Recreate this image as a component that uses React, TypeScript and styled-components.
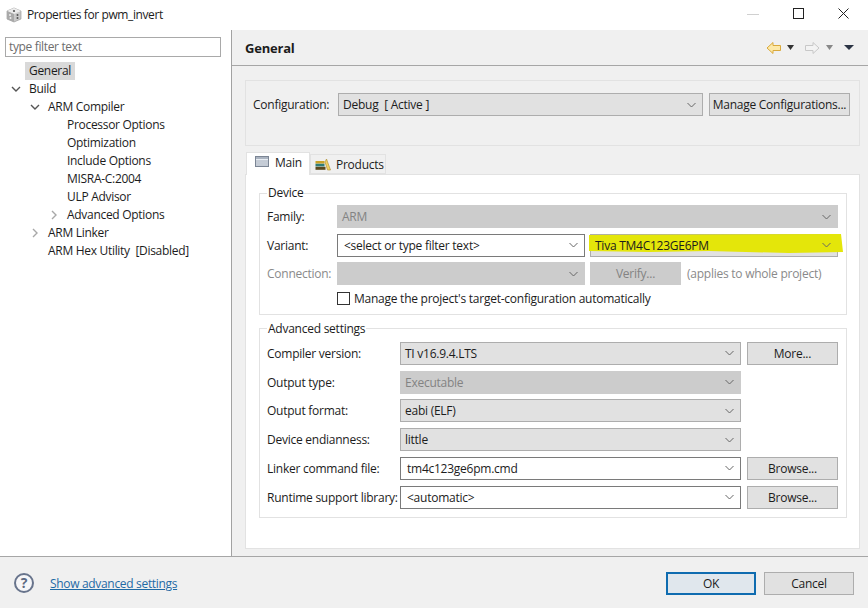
import React from "react";
import styled, { createGlobalStyle } from "styled-components";

const Global = createGlobalStyle`
  html, body { margin: 0; padding: 0; background: #fff; }
  * { box-sizing: border-box; }
  body {
    font-family: "Open Sans", "Noto Sans", "Liberation Sans", sans-serif;
    font-size: 12px;
    letter-spacing: -0.25px;
    color: #1c1c1c;
  }
`;

const Window = styled.div`
  width: 868px;
  height: 608px;
  display: flex;
  flex-direction: column;
  overflow: hidden;
  background: #fff;
`;

const TitleBar = styled.div`
  height: 30px;
  flex: none;
  display: flex;
  align-items: center;
  padding: 0 0 1px 6px;
  font-size: 12px;
`;
const TitleText = styled.span`
  margin-left: 5px;
  flex: 1;
  letter-spacing: -0.4px;
`;
const WinControls = styled.div`
  display: flex;
  align-items: center;
  padding: 0 19px 2px 0;
  gap: 34px;
`;

const Body = styled.div`
  flex: 1;
  display: flex;
  min-height: 0;
`;

const Sidebar = styled.div`
  width: 232px;
  flex: none;
  border-right: 1px solid #a2a2a2;
  padding: 7px 10px 0 5px;
`;
const Filter = styled.div`
  height: 20px;
  border: 1px solid #a9a9a9;
  padding-left: 3px;
  line-height: 17px;
  color: #6d6d6d;
  letter-spacing: -0.35px;
`;
const Tree = styled.div`
  margin-top: 5px;
`;
const TreeRow = styled.div<{ $level: number }>`
  height: 18px;
  display: flex;
  align-items: center;
  padding-left: ${({ $level }) => 20 + $level * 19}px;
  position: relative;
`;
const TreeLabel = styled.span<{ $selected?: boolean }>`
  padding: 0 4px;
  line-height: 18px;
  background: ${({ $selected }) => ($selected ? "#d9d9d9" : "transparent")};
  white-space: pre;
  letter-spacing: -0.3px;
`;
const Twist = styled.svg`
  position: absolute;
  margin-left: -14px;
  width: 10px;
  height: 10px;
`;

const Content = styled.div`
  flex: 1;
  background: #f0f0f0;
  display: flex;
  flex-direction: column;
  min-width: 0;
`;
const PageHeader = styled.div`
  height: 36px;
  flex: none;
  border-bottom: 1px solid #a6a6a6;
  display: flex;
  align-items: center;
  padding: 0 14px 0 13px;
  justify-content: space-between;
`;
const PageTitle = styled.div`
  font-size: 13px;
  font-weight: 700;
  letter-spacing: -0.2px;
`;
const NavIcons = styled.div`
  display: flex;
  align-items: center;
`;
const NavGlyph = styled.svg<{ $gap: number }>`
  margin-left: ${({ $gap }) => $gap}px;
  flex: none;
`;
const ContentInner = styled.div`
  flex: 1;
  padding: 14px 8px 7px 13px;
  display: flex;
  flex-direction: column;
`;
const ConfigBox = styled.div`
  height: 66px;
  flex: none;
  border: 1px solid #e2e2e2;
  padding: 12px 9px 0 7px;
  display: flex;
  align-items: flex-start;
  gap: 6px;
`;
const ConfigLabel = styled.span`
  width: 79px;
  line-height: 23px;
  flex: none;
`;

const Tabs = styled.div`
  margin-top: 5px;
  height: 23px;
  flex: none;
  display: flex;
  align-items: flex-end;
  padding-left: 1px;
`;
const Tab = styled.div<{ $active?: boolean }>`
  height: ${({ $active }) => ($active ? 23 : 20)}px;
  width: ${({ $active }) => ($active ? 64 : 76)}px;
  background: ${({ $active }) => ($active ? "#fff" : "#f0f0f0")};
  border: 1px solid #e2e2e2;
  border-bottom: ${({ $active }) => ($active ? "none" : "1px solid #e2e2e2")};
  display: flex;
  align-items: center;
  padding: ${({ $active }) => ($active ? "0 0 4px 8px" : "0 0 0 4px")};
  gap: ${({ $active }) => ($active ? 6 : 5)}px;
  margin-bottom: ${({ $active }) => ($active ? -1 : 0)}px;
  position: relative;
`;
const Folder = styled.div`
  flex: 1;
  background: #fff;
  border: 1px solid #e2e2e2;
  padding: 10px 12px 0 13px;
`;

const Group = styled.fieldset`
  margin: 0 0 6px;
  padding: 4px 8px 8px 7px;
  border: 1px solid #e2e2e2;
  min-width: 0;
`;
const Legend = styled.legend`
  padding: 0 1px;
  margin-left: 0;
  line-height: 16px;
`;

const DeviceGrid = styled.div`
  display: grid;
  grid-template-columns: 65px 248px 91px 1fr;
  grid-template-rows: 23px 23px 23px 15px;
  column-gap: 5px;
  row-gap: 5.6px;
  align-items: center;
`;
const AdvancedGrid = styled.div`
  display: grid;
  grid-template-columns: 128px 341px 92px;
  column-gap: 5px;
  grid-auto-rows: 23px;
  row-gap: 5.8px;
  margin-top: 1px;
  align-items: center;
`;
const FieldLabel = styled.span<{ $disabled?: boolean }>`
  color: ${({ $disabled }) => ($disabled ? "#8a8a8a" : "inherit")};
  white-space: nowrap;
`;

type ComboKind = "flat" | "edit" | "disabled";
const ComboBox = styled.div<{ $kind: ComboKind; $span?: string; $w?: number }>`
  height: 23px;
  width: ${({ $w }) => ($w ? `${$w}px` : "auto")};
  grid-column: ${({ $span }) => $span ?? "auto"};
  position: relative;
  display: flex;
  align-items: center;
  justify-content: space-between;
  padding: 0 6px 0 ${({ $kind }) => ($kind === "edit" ? 6 : 4)}px;
  background: ${({ $kind }) =>
    $kind === "edit" ? "#fff" : $kind === "disabled" ? "#cccccc" : "#e1e1e1"};
  border: 1px solid
    ${({ $kind }) =>
      $kind === "edit" ? "#7a7a7a" : $kind === "disabled" ? "#cccccc" : "#adadad"};
  color: ${({ $kind }) => ($kind === "disabled" ? "#838383" : "inherit")};
`;
const ComboText = styled.span`
  position: relative;
  white-space: pre;
`;
const Chevron = styled.svg`
  position: relative;
  width: 9px;
  height: 6px;
  flex: none;
`;
const Highlight = styled.svg`
  position: absolute;
  left: -2px;
  top: -1px;
  width: 254px;
  height: 20px;
`;

const Button = styled.button<{ $disabled?: boolean; $default?: boolean; $w?: number; $end?: boolean }>`
  height: 23px;
  width: ${({ $w }) => ($w ? `${$w}px` : "auto")};
  justify-self: ${({ $end }) => ($end ? "end" : "stretch")};
  padding: 0;
  font: inherit;
  letter-spacing: inherit;
  background: ${({ $disabled, $default }) => ($disabled ? "#cccccc" : $default ? "#e0e7ed" : "#e1e1e1")};
  border: ${({ $default }) => ($default ? "2px solid #0f6cb0" : "1px solid #adadad")};
  color: ${({ $disabled }) => ($disabled ? "#838383" : "inherit")};
  ${({ $disabled }) => ($disabled ? "border-color: #cccccc;" : "")}
`;
const Hint = styled.span`
  color: #8a8a8a;
  white-space: nowrap;
  padding-left: 1px;
`;
const CheckRow = styled.label`
  grid-column: 2 / 5;
  display: flex;
  align-items: center;
  gap: 4px;
  height: 15px;
`;
const CheckBox = styled.span`
  width: 13px;
  height: 13px;
  border: 1px solid #333;
  background: #fff;
  flex: none;
`;

const Footer = styled.div`
  height: 52px;
  flex: none;
  background: #f0f0f0;
  border-top: 1px solid #a6a6a6;
  display: flex;
  align-items: center;
  padding: 1px 14px 0 14px;
`;
const HelpIcon = styled.span`
  width: 20px;
  height: 20px;
  border-radius: 50%;
  border: 2px solid #68748c;
  color: #5d6a82;
  font-weight: 700;
  font-size: 14px;
  line-height: 16px;
  text-align: center;
  background: #f6f6f8;
  flex: none;
`;
const HelpLink = styled.a`
  margin-left: 16px;
  flex: 1;
  color: #1f6aa5;
  text-decoration: underline;
  letter-spacing: -0.32px;
`;
const FooterButtons = styled.div`
  display: flex;
  gap: 8px;
`;

const ChevronIcon = () => (
  <Chevron viewBox="0 0 9 6">
    <path d="M0.5 1l4 4 4-4" fill="none" stroke="#666" strokeWidth="1" />
  </Chevron>
);

const Combo = ({ kind, text, span, children }: { kind: ComboKind; text: string; span?: string; children?: React.ReactNode }) => (
  <ComboBox $kind={kind} $span={span}>
    {children}
    <ComboText>{text}</ComboText>
    <ChevronIcon />
  </ComboBox>
);

const TwistDown = () => (
  <Twist viewBox="0 0 10 10">
    <path d="M1 3l4 4 4-4" fill="none" stroke="#555" strokeWidth="1.4" />
  </Twist>
);
const TwistRight = () => (
  <Twist viewBox="0 0 10 10">
    <path d="M3 1l4 4-4 4" fill="none" stroke="#a8a8a8" strokeWidth="1.4" />
  </Twist>
);

const DiceIcon = () => (
  <svg width="16" height="16" viewBox="0 0 16 16">
    <path d="M8 1l7 3v8l-7 3-7-3V4z" fill="#c9c9c9" stroke="#8e8e8e" strokeWidth="0.6" />
    <path d="M8 1l7 3-7 3-7-3z" fill="#ececec" />
    <path d="M8 7v8l-7-3V4z" fill="#a9a9a9" />
    <circle cx="8" cy="4" r="1.1" fill="#555" />
    <circle cx="4" cy="8" r="1" fill="#eee" />
    <circle cx="4.5" cy="11" r="1" fill="#eee" />
    <circle cx="11.5" cy="8" r="1" fill="#555" />
    <circle cx="11.5" cy="11" r="1" fill="#555" />
  </svg>
);

const TableIcon = () => (
  <svg width="14" height="12" viewBox="0 0 14 12">
    <rect x="0.5" y="0.5" width="13" height="10" fill="#e8edf3" stroke="#7b8594" />
    <rect x="1" y="1" width="12" height="2" fill="#aab3c0" />
    <path d="M1 5h12M1 7h12M1 9h12" stroke="#8f99a8" strokeWidth="0.8" />
  </svg>
);

const BooksIcon = () => (
  <svg width="16" height="13" viewBox="0 0 16 13">
    <rect x="0.5" y="3" width="9" height="2.6" fill="#c9a227" />
    <rect x="0.5" y="5.8" width="9" height="2.6" fill="#2f7d78" />
    <rect x="0.5" y="8.8" width="10" height="3" fill="#5b4a1e" />
    <path d="M11.5 1L15.5 12H12.5L10 4z" fill="#f0cf63" stroke="#a88a2b" strokeWidth="0.6" />
  </svg>
);

const Caret = ({ color, w, gap }: { color: string; w: number; gap: number }) => (
  <NavGlyph $gap={gap} width={w} height="5" viewBox="0 0 8 5" preserveAspectRatio="none">
    <path d="M0 0h8L4 5z" fill={color} />
  </NavGlyph>
);

const treeItems: { label: string; level: number; twist?: "down" | "right"; selected?: boolean }[] = [
  { label: "General", level: 0, selected: true },
  { label: "Build", level: 0, twist: "down" },
  { label: "ARM Compiler", level: 1, twist: "down" },
  { label: "Processor Options", level: 2 },
  { label: "Optimization", level: 2 },
  { label: "Include Options", level: 2 },
  { label: "MISRA-C:2004", level: 2 },
  { label: "ULP Advisor", level: 2 },
  { label: "Advanced Options", level: 2, twist: "right" },
  { label: "ARM Linker", level: 1, twist: "right" },
  { label: "ARM Hex Utility  [Disabled]", level: 1 },
];

export default function App() {
  return (
    <Window>
      <Global />
      <TitleBar>
        <DiceIcon />
        <TitleText>Properties for pwm_invert</TitleText>
        <WinControls>
          <svg width="12" height="12" viewBox="0 0 12 12">
            <path d="M0 6.5h12" stroke="#d0d0d0" />
          </svg>
          <svg width="11" height="11" viewBox="0 0 11 11">
            <rect x="0.5" y="0.5" width="10" height="10" fill="none" stroke="#222" />
          </svg>
          <svg width="11" height="11" viewBox="0 0 11 11">
            <path d="M0.5 0.5l10 10M10.5 0.5l-10 10" stroke="#222" />
          </svg>
        </WinControls>
      </TitleBar>
      <Body>
        <Sidebar>
          <Filter>type filter text</Filter>
          <Tree>
            {treeItems.map((item) => (
              <TreeRow key={item.label} $level={item.level}>
                {item.twist === "down" && <TwistDown />}
                {item.twist === "right" && <TwistRight />}
                <TreeLabel $selected={item.selected}>{item.label}</TreeLabel>
              </TreeRow>
            ))}
          </Tree>
        </Sidebar>
        <Content>
          <PageHeader>
            <PageTitle>General</PageTitle>
            <NavIcons>
              <NavGlyph $gap={0} width="16" height="14" viewBox="0 0 16 14">
                <path d="M1 7l6-5.5V4.5h7.5v5H7v3z" fill="#fde9a8" stroke="#d9a93c" strokeWidth="1" />
              </NavGlyph>
              <Caret color="#333" w={7} gap={5} />
              <NavGlyph $gap={10} width="16" height="14" viewBox="0 0 16 14">
                <path d="M15 7L9 1.5V4.5H1.5v5H9v3z" fill="#f3f3f3" stroke="#c8c8c8" strokeWidth="1" />
              </NavGlyph>
              <Caret color="#888" w={7} gap={6} />
              <Caret color="#2b3444" w={10} gap={11} />
            </NavIcons>
          </PageHeader>
          <ContentInner>
            <ConfigBox>
              <ConfigLabel>Configuration:</ConfigLabel>
              <ComboBox $kind="flat" $w={365}>
                <ComboText>Debug  [ Active ]</ComboText>
                <ChevronIcon />
              </ComboBox>
              <Button $w={141}>Manage Configurations...</Button>
            </ConfigBox>
            <Tabs>
              <Tab $active>
                <TableIcon />
                Main
              </Tab>
              <Tab>
                <BooksIcon />
                Products
              </Tab>
            </Tabs>
            <Folder>
              <Group>
                <Legend>Device</Legend>
                <DeviceGrid>
                  <FieldLabel>Family:</FieldLabel>
                  <Combo kind="disabled" text="ARM" span="2 / 5" />
                  <FieldLabel>Variant:</FieldLabel>
                  <Combo kind="edit" text="<select or type filter text>" />
                  <Combo kind="flat" text="Tiva TM4C123GE6PM" span="3 / 5">
                    <Highlight viewBox="0 0 254 20" preserveAspectRatio="none">
                      <path d="M0 1L252 0L254 18L200 19L120 17L60 18L0 17z" fill="#e4e60a" />
                    </Highlight>
                  </Combo>
                  <FieldLabel $disabled>Connection:</FieldLabel>
                  <Combo kind="disabled" text="" />
                  <Button $disabled>Verify...</Button>
                  <Hint>(applies to whole project)</Hint>
                  <CheckRow>
                    <CheckBox />
                    Manage the project's target-configuration automatically
                  </CheckRow>
                </DeviceGrid>
              </Group>
              <Group>
                <Legend>Advanced settings</Legend>
                <AdvancedGrid>
                  <FieldLabel>Compiler version:</FieldLabel>
                  <Combo kind="flat" text="TI v16.9.4.LTS" />
                  <Button $w={91} $end>More...</Button>
                  <FieldLabel>Output type:</FieldLabel>
                  <Combo kind="disabled" text="Executable" />
                  <span />
                  <FieldLabel>Output format:</FieldLabel>
                  <Combo kind="flat" text="eabi (ELF)" />
                  <span />
                  <FieldLabel>Device endianness:</FieldLabel>
                  <Combo kind="flat" text="little" />
                  <span />
                  <FieldLabel>Linker command file:</FieldLabel>
                  <Combo kind="edit" text="tm4c123ge6pm.cmd" />
                  <Button $w={91} $end>Browse...</Button>
                  <FieldLabel>Runtime support library:</FieldLabel>
                  <Combo kind="edit" text="<automatic>" />
                  <Button $w={91} $end>Browse...</Button>
                </AdvancedGrid>
              </Group>
            </Folder>
          </ContentInner>
        </Content>
      </Body>
      <Footer>
        <HelpIcon>?</HelpIcon>
        <HelpLink>Show advanced settings</HelpLink>
        <FooterButtons>
          <Button $default $w={90}>
            OK
          </Button>
          <Button $w={90}>Cancel</Button>
        </FooterButtons>
      </Footer>
    </Window>
  );
}
